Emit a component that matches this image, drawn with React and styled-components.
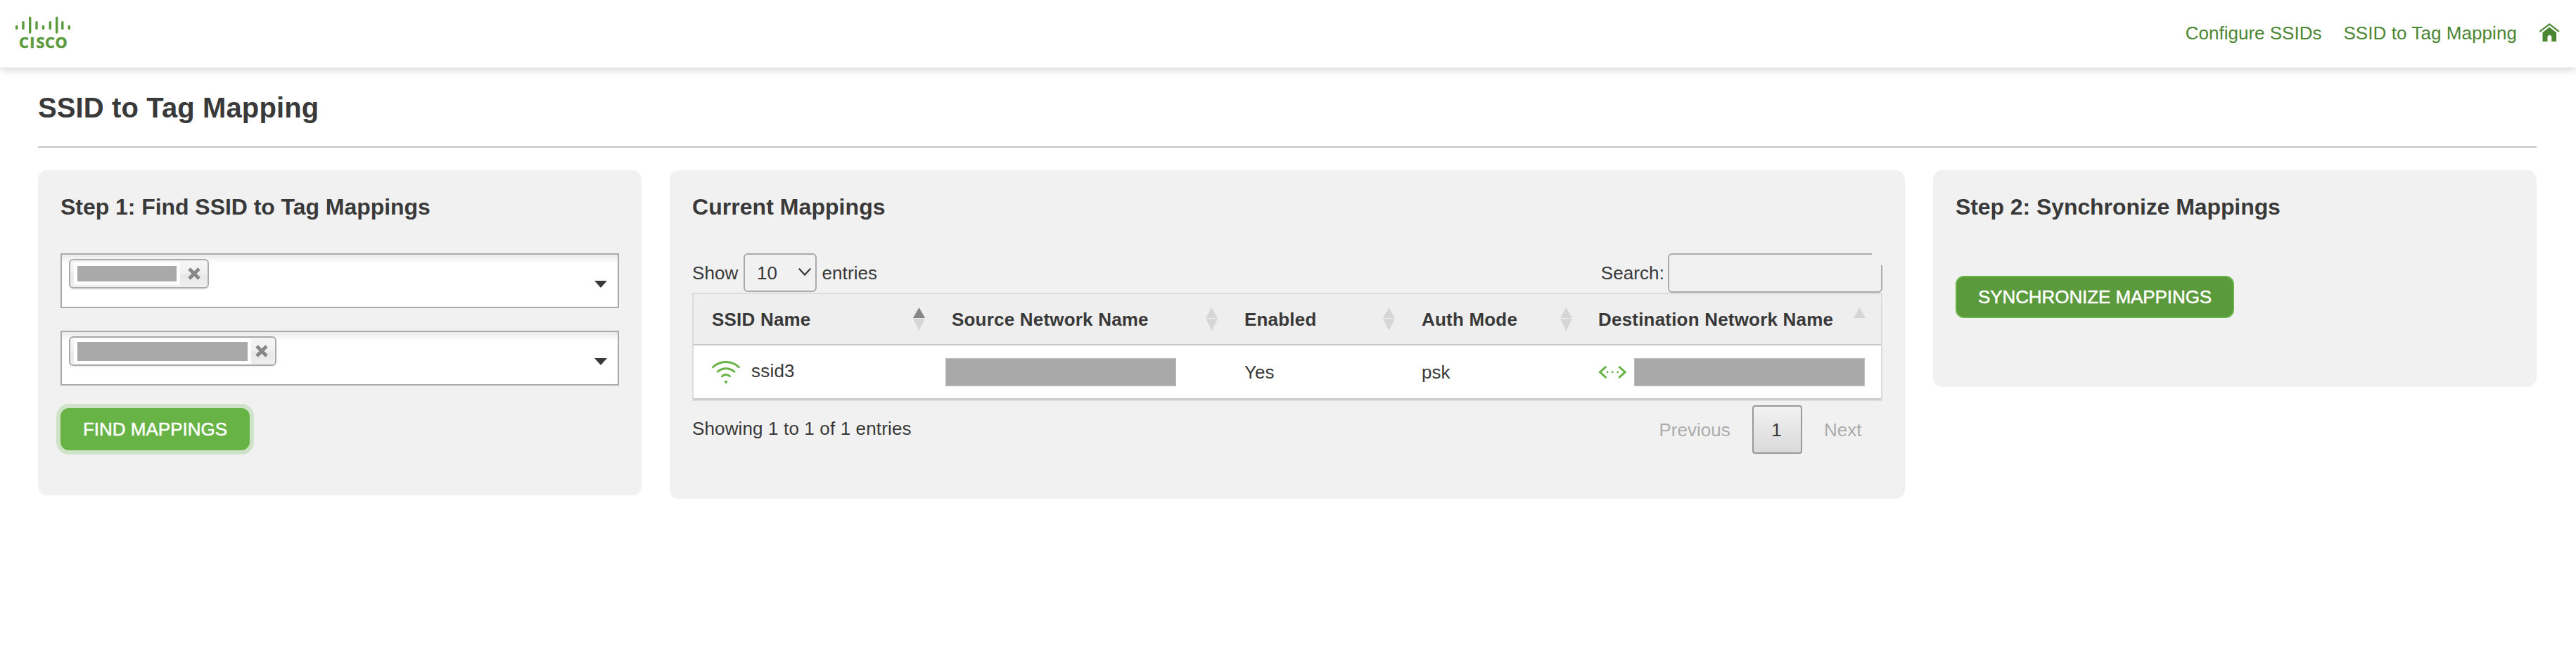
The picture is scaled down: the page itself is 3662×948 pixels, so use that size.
import React from "react";
import styled, { createGlobalStyle } from "styled-components";

const GlobalStyle = createGlobalStyle`
  *, *::before, *::after { box-sizing: border-box; }
  body {
    margin: 0;
    background: #fff;
    color: #393939;
    font: 26px/30px "Liberation Sans", Arial, sans-serif;
  }
`;

/* ---------- header ---------- */

const Header = styled.header`
  height: 96px;
  padding: 0 20px 2px 20px;
  display: flex;
  align-items: center;
  justify-content: space-between;
  background: #fff;
  box-shadow: 0 2px 12px rgba(0, 0, 0, 0.2);
  clip-path: inset(0 0 -16px 0);
`;

const Logo = styled.svg`
  display: block;
  width: 84px;
  height: 70px;
  overflow: visible;
  fill: #5b9b3d;
  stroke: #5b9b3d;
  stroke-width: 0;
`;

const LogoText = styled.text`
  font: 700 21.6px "Open Sans", "Noto Sans", sans-serif;
  stroke-width: 0.6px;
`;

const Nav = styled.nav`
  display: flex;
  align-items: center;
  color: #4b8632;
`;

const NavLink = styled.a`
  margin-right: ${(p) => p.$gap}px;
  letter-spacing: ${(p) => p.$spacing || 0}px;
  white-space: nowrap;
`;

const HomeIcon = styled.svg`
  display: block;
  width: 29px;
  height: 27px;
  margin: -1px 3px 0 0;
`;

/* ---------- page ---------- */

const Page = styled.main`
  padding: 0 56px 0 54px;
`;

const PageTitle = styled.h1`
  margin: 0 0 32px;
  height: 114px;
  border-bottom: 2px solid #c6c6c6;
  font-size: 40px;
  line-height: 114px;
  font-weight: 700;
  letter-spacing: 0.12px;
`;

const Columns = styled.div`
  display: grid;
  grid-template-columns: 858px 1fr 858px;
  gap: 40px;
  align-items: start;
`;

const Panel = styled.section`
  height: ${(p) => p.$height}px;
  padding: 32px;
  border-radius: 13px;
  background: #f1f1f1;
`;

const PanelTitle = styled.h2`
  margin: 0 0 ${(p) => p.$gap || 46}px;
  font-size: 32px;
  line-height: 40px;
  font-weight: 700;
  letter-spacing: ${(p) => p.$spacing || 0}px;
`;

const Button = styled.button`
  display: block;
  width: ${(p) => p.$width}px;
  height: 60px;
  padding: 0 0 1px;
  border: 2px solid #67b346;
  border-radius: 12px;
  background: ${(p) => (p.$focused ? "#67b346" : "#5b9a3c")};
  box-shadow: ${(p) => (p.$focused ? "0 0 0 6px #cfe3c8" : "none")};
  color: #fff;
  font: inherit;
  letter-spacing: ${(p) => p.$spacing || 0}px;
  -webkit-text-stroke: 0.5px #fff;
  white-space: nowrap;
`;

/* ---------- multi select ---------- */

const MultiSelect = styled.div`
  display: flex;
  align-items: flex-start;
  justify-content: space-between;
  height: 78px;
  margin-bottom: 32px;
  padding: 6px 15px 0 10px;
  border: 2px solid #aaa;
  background: linear-gradient(#eaeaea, #fff 12px);
`;

const Chip = styled.div`
  display: flex;
  align-items: center;
  justify-content: space-between;
  width: ${(p) => p.$width}px;
  height: 42px;
  padding: 0 10px 0 5px;
  border: 2px solid #aaa;
  border-radius: 6px;
  background: linear-gradient(#f4f4f4 20%, #f0f0f0 50%, #e8e8e8 52%, #eee);
  box-shadow: 0 0 2px #fff inset, 0 2px 0 rgba(0, 0, 0, 0.05);
`;

const ChipLabel = styled.div`
  width: ${(p) => p.$width}px;
  height: ${(p) => p.$height}px;
  border: 5px solid #fff;
  background: #a9a9a9;
`;

const Remove = styled.svg`
  display: block;
  width: 18px;
  height: 18px;
  stroke: #888;
  stroke-width: 5;
`;

const Caret = styled.i`
  margin-top: 31px;
  border: 9px solid transparent;
  border-top: 10px solid #393939;
  border-bottom: 0;
`;

/* ---------- table ---------- */

const Toolbar = styled.div`
  display: flex;
  align-items: center;
  justify-content: space-between;
  height: 56px;
`;

const Control = styled.label`
  display: flex;
  align-items: center;
  gap: ${(p) => p.$gap}px;
  height: 56px;
  letter-spacing: 0.1px;
`;

const LengthSelect = styled.span`
  display: flex;
  align-items: center;
  justify-content: space-between;
  align-self: flex-start;
  width: 104px;
  height: 55px;
  padding: 1px 6px 0 17px;
  border: 2px solid #aaa;
  border-radius: 6px;
`;

const Chevron = styled.svg`
  display: block;
  width: 18px;
  height: 12px;
  margin-bottom: 2px;
  fill: none;
  stroke: #393939;
  stroke-width: 2.2;
  stroke-linecap: round;
`;

const SearchField = styled.span`
  position: relative;
  width: 305px;
  height: 56px;
  border: 2px solid #aaa;
  border-radius: 6px;

  &::after {
    content: "";
    position: absolute;
    top: -3px;
    right: -3px;
    width: 16px;
    height: 18px;
    background: #f1f1f1;
  }
`;

const Table = styled.div`
  border: 2px solid #dcdcdc;
`;

const Row = styled.div`
  display: grid;
  grid-template-columns: 340px 416px 252px 252px 428px;
  border-bottom: 2px solid #c8c8c8;
  background: ${(p) => (p.$head ? "#eee" : "#fff")};
`;

const HeadCell = styled.div`
  display: flex;
  justify-content: space-between;
  height: 71px;
  padding: 0 ${(p) => (p.$last ? 22 : 11)}px 0 ${(p) => p.$inset || 26}px;
  font-weight: 700;
  line-height: 72px;
  letter-spacing: 0.2px;
  white-space: nowrap;
`;

const SortIcon = styled.svg`
  display: block;
  width: 17px;
  height: 33px;
  margin-top: 19px;
`;

const Cell = styled.div`
  display: flex;
  align-items: center;
  height: 75px;
  padding: 1px 0 0 ${(p) => p.$inset ?? 26}px;
`;

const SsidName = styled.span`
  margin: -4px 0 0 16px;
  letter-spacing: 0.2px;
`;

const Masked = styled.span`
  width: 328px;
  height: 40px;
  margin: 0 0 1px ${(p) => p.$gap || 0}px;
  border: 1px solid #bdbdbd;
  background: #a9a9a9;
`;

const CellIcon = styled.svg`
  display: block;
  flex: none;
  stroke: #67b346;
  stroke-width: 2.9;
  stroke-linecap: round;
  fill: none;
`;

const Dots = styled.g`
  fill: #67b346;
  stroke: none;
`;

const TableFooter = styled.div`
  display: flex;
  justify-content: space-between;
  padding-top: 6px;
`;

const Info = styled.span`
  line-height: 66px;
  letter-spacing: 0.14px;
`;

const Pager = styled.div`
  display: flex;
  line-height: 70px;
  color: #acacac;
`;

const PagerLink = styled.span`
  width: ${(p) => p.$width}px;
`;

const CurrentPage = styled.span`
  width: 71px;
  height: 69px;
  margin-right: 31px;
  padding-right: 2px;
  border: 2px solid #999;
  border-radius: 4px;
  background: linear-gradient(#f2f2f2, #d9d9d9);
  color: #393939;
  line-height: 66px;
  text-align: center;
`;

const LOGO_BARS = [
  [23.7, 35.7, 42.3],
  [33, 30, 42.3],
  [42.7, 23.4, 47.7],
  [52, 30, 42.3],
  [61.5, 35.7, 42.3],
  [71.3, 30, 42.3],
  [80.7, 23.4, 47.7],
  [88.8, 30, 42.3],
  [98.3, 35.7, 42.3],
];

const SORT_COLUMNS = [
  { label: "SSID Name", up: "#868686", down: "#d6d6d6" },
  { label: "Source Network Name", up: "#d6d6d6", down: "#d6d6d6", inset: 27 },
  { label: "Enabled", up: "#d6d6d6", down: "#d6d6d6", inset: 27 },
  { label: "Auth Mode", up: "#d6d6d6", down: "#d6d6d6", inset: 27 },
  { label: "Destination Network Name", up: "#d6d6d6" },
];

function CiscoLogo() {
  return (
    <Logo viewBox="20 12 84 70" aria-label="Cisco">
      {LOGO_BARS.map(([x, top, bottom]) => (
        <rect key={x} x={x - 1.7} y={top} width="3.4" height={bottom - top} rx="1.7" />
      ))}
      <LogoText x="26.9 42.3 51.5 64 78.4" y="68.4">CISCO</LogoText>
    </Logo>
  );
}

function TagField({ chipWidth, labelWidth, labelHeight }) {
  return (
    <MultiSelect>
      <Chip $width={chipWidth}>
        <ChipLabel $width={labelWidth} $height={labelHeight} />
        <Remove viewBox="0 0 18 18">
          <path d="M2 2L16 16M16 2L2 16" />
        </Remove>
      </Chip>
      <Caret />
    </MultiSelect>
  );
}

export default function App() {
  return (
    <>
      <GlobalStyle />
      <Header>
        <CiscoLogo />
        <Nav>
          <NavLink $gap={31}>Configure SSIDs</NavLink>
          <NavLink $gap={32} $spacing={0.07}>SSID to Tag Mapping</NavLink>
          <HomeIcon viewBox="0 0 29 27">
            <path d="M1.2 11.3L14.2 1.4L27.2 11.3" fill="none" stroke="currentColor" strokeWidth="2.2" strokeLinecap="round" />
            <path d="M4.5 13.2L14.2 5.6L24.1 13.2V26H17.3V19.6Q17.3 17 14.4 17T11.5 19.6V26H4.5Z" fill="currentColor" />
          </HomeIcon>
        </Nav>
      </Header>

      <Page>
        <PageTitle>SSID to Tag Mapping</PageTitle>
        <Columns>
          <Panel $height={462}>
            <PanelTitle $spacing={-0.05}>Step 1: Find SSID to Tag Mappings</PanelTitle>
            <TagField chipWidth={199} labelWidth={151} labelHeight={32} />
            <TagField chipWidth={295} labelWidth={252} labelHeight={37} />
            <Button $width={269} $focused>FIND MAPPINGS</Button>
          </Panel>

          <Panel $height={467}>
            <PanelTitle $spacing={0.05}>Current Mappings</PanelTitle>
            <Toolbar>
              <Control $gap={7.5}>
                Show
                <LengthSelect>
                  10
                  <Chevron viewBox="0 0 18 12">
                    <path d="M1.3 1.3L9 9.6L16.7 1.3" />
                  </Chevron>
                </LengthSelect>
                entries
              </Control>
              <Control $gap={5}>
                Search:
                <SearchField />
              </Control>
            </Toolbar>

            <Table>
              <Row $head>
                {SORT_COLUMNS.map((column) => (
                  <HeadCell key={column.label} $last={!column.down} $inset={column.inset}>
                    {column.label}
                    <SortIcon viewBox="0 0 17 33">
                      <path d="M8.5 0L17 15H0Z" fill={column.up} />
                      {column.down && <path d="M0 16H17L8.5 33Z" fill={column.down} />}
                    </SortIcon>
                  </HeadCell>
                ))}
              </Row>
              <Row>
                <Cell>
                  <CellIcon width="40" height="32" viewBox="0 0 40 32">
                    <path d="M1.5 8.7A27.4 27.4 0 0 1 38.5 8.7M8.2 15.2A18 18 0 0 1 31.8 15.2M14.5 21.8A7.7 7.7 0 0 1 25.5 21.8" />
                    <Dots>
                      <circle cx="20" cy="29.8" r="2.1" />
                    </Dots>
                  </CellIcon>
                  <SsidName>ssid3</SsidName>
                </Cell>
                <Cell $inset={18}>
                  <Masked />
                </Cell>
                <Cell $inset={27}>Yes</Cell>
                <Cell $inset={27}>psk</Cell>
                <Cell>
                  <CellIcon width="41" height="18" viewBox="0 0 41 18">
                    <path d="M10.5 1.7L2.5 8.9L10.5 16.1M30.2 1.7L38.2 8.9L30.2 16.1" />
                    <Dots>
                      <circle cx="13" cy="8.9" r="1.4" />
                      <circle cx="20.3" cy="8.9" r="1.4" />
                      <circle cx="27.6" cy="8.9" r="1.4" />
                    </Dots>
                  </CellIcon>
                  <Masked $gap={10} />
                </Cell>
              </Row>
            </Table>

            <TableFooter>
              <Info>Showing 1 to 1 of 1 entries</Info>
              <Pager>
                <PagerLink $width={132.5}>Previous</PagerLink>
                <CurrentPage>1</CurrentPage>
                <PagerLink $width={83}>Next</PagerLink>
              </Pager>
            </TableFooter>
          </Panel>

          <Panel $height={308}>
            <PanelTitle $gap={78} $spacing={-0.08}>Step 2: Synchronize Mappings</PanelTitle>
            <Button $width={396} $spacing={-0.08}>SYNCHRONIZE MAPPINGS</Button>
          </Panel>
        </Columns>
      </Page>
    </>
  );
}
